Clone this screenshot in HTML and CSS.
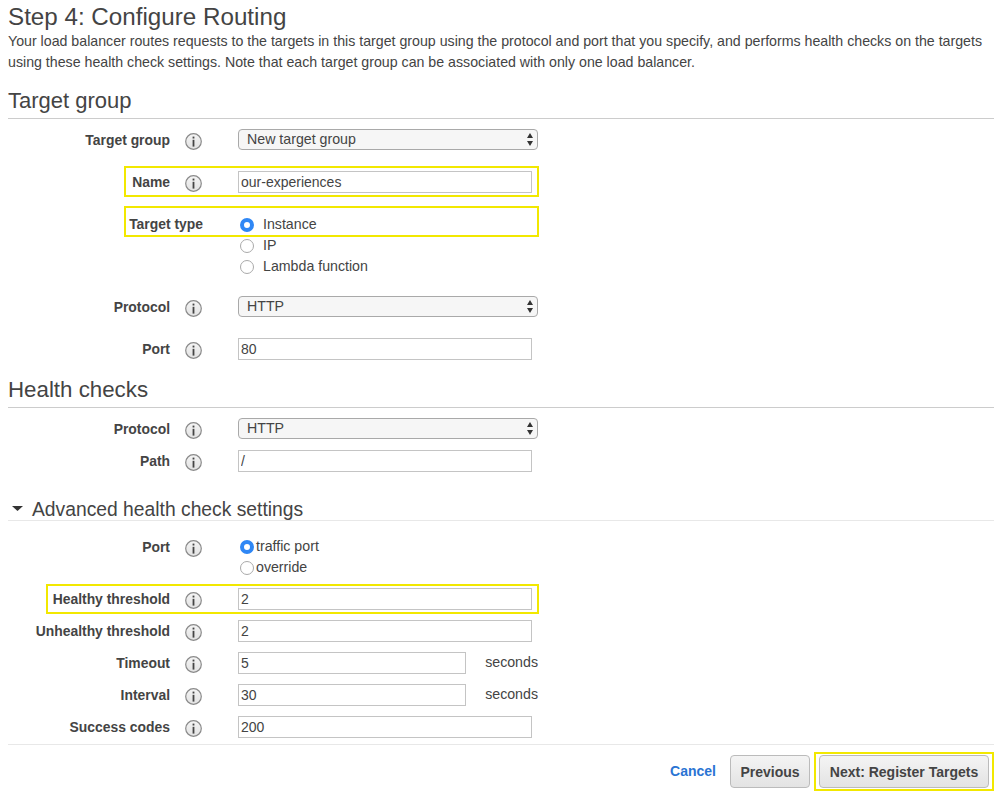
FILE: index.html
```html
<!DOCTYPE html>
<html lang="en">
<head>
<meta charset="utf-8">
<title>Step 4: Configure Routing</title>
<link rel="stylesheet" href="styles.css">
</head>
<body>
<svg class="defs" width="0" height="0" aria-hidden="true">
  <symbol id="info" viewBox="0 0 17 17">
    <defs>
      <linearGradient id="info-fill" x1="0" y1="0" x2="0" y2="1">
        <stop offset="0" stop-color="#f4f4f4"/>
        <stop offset="1" stop-color="#e2e2e2"/>
      </linearGradient>
    </defs>
    <circle cx="8.5" cy="8.5" r="7.8" fill="url(#info-fill)" stroke="#8a8a8a" stroke-width="1.2"/>
    <rect x="7.6" y="6.8" width="1.8" height="6.8" fill="#444"/>
    <rect x="7.6" y="3.6" width="1.8" height="1.9" fill="#444"/>
  </symbol>
</svg>
<main class="page">
  <h1 class="title">Step 4: Configure Routing</h1>
  <p class="intro">Your load balancer routes requests to the targets in this target group using the protocol and port that you specify, and performs health checks on the targets using these health check settings. Note that each target group can be associated with only one load balancer.</p>

  <h2 class="section section-target">Target group</h2>
  <form class="form">
    <div class="row m-10">
      <label class="label">Target group</label>
      <svg class="info"><use href="#info"/></svg>
      <div class="select-wrap">
        <select class="select"><option>New target group</option></select>
        <svg class="arrows" viewBox="0 0 6 13"><path d="M3 0L6 5H0ZM3 13L0 8H6Z"/></svg>
      </div>
    </div>
    <div class="row m-21">
      <label class="label">Name</label>
      <svg class="info"><use href="#info"/></svg>
      <input class="input" type="text" value="our-experiences">
    </div>
    <div class="row m-21">
      <label class="label label-wide">Target type</label>
      <div class="radios">
        <label class="radio"><input class="radio-input" type="radio" name="type" checked>Instance</label>
        <label class="radio"><input class="radio-input" type="radio" name="type">IP</label>
        <label class="radio"><input class="radio-input" type="radio" name="type">Lambda function</label>
      </div>
    </div>
    <div class="row m-19">
      <label class="label">Protocol</label>
      <svg class="info"><use href="#info"/></svg>
      <div class="select-wrap">
        <select class="select"><option>HTTP</option></select>
        <svg class="arrows" viewBox="0 0 6 13"><path d="M3 0L6 5H0ZM3 13L0 8H6Z"/></svg>
      </div>
    </div>
    <div class="row m-21">
      <label class="label">Port</label>
      <svg class="info"><use href="#info"/></svg>
      <input class="input" type="text" value="80">
    </div>

    <h2 class="section section-health">Health checks</h2>
    <div class="row m-10">
      <label class="label">Protocol</label>
      <svg class="info"><use href="#info"/></svg>
      <div class="select-wrap">
        <select class="select"><option>HTTP</option></select>
        <svg class="arrows" viewBox="0 0 6 13"><path d="M3 0L6 5H0ZM3 13L0 8H6Z"/></svg>
      </div>
    </div>
    <div class="row m-11">
      <label class="label">Path</label>
      <svg class="info"><use href="#info"/></svg>
      <input class="input" type="text" value="/">
    </div>

    <h3 class="advanced"><svg class="caret" viewBox="0 0 11 5"><path d="M0 0H11L5.5 5Z"/></svg>Advanced health check settings</h3>
    <div class="row m-15">
      <label class="label">Port</label>
      <svg class="info"><use href="#info"/></svg>
      <div class="radios radios-compact">
        <label class="radio"><input class="radio-input" type="radio" name="port" checked>traffic port</label>
        <label class="radio"><input class="radio-input" type="radio" name="port">override</label>
      </div>
    </div>
    <div class="row m-10">
      <label class="label">Healthy threshold</label>
      <svg class="info"><use href="#info"/></svg>
      <input class="input" type="text" value="2">
    </div>
    <div class="row m-10">
      <label class="label">Unhealthy threshold</label>
      <svg class="info"><use href="#info"/></svg>
      <input class="input" type="text" value="2">
    </div>
    <div class="row m-10">
      <label class="label">Timeout</label>
      <svg class="info"><use href="#info"/></svg>
      <div class="with-unit"><input class="input input-short" type="text" value="5"><span class="unit">seconds</span></div>
    </div>
    <div class="row m-10">
      <label class="label">Interval</label>
      <svg class="info"><use href="#info"/></svg>
      <div class="with-unit"><input class="input input-short" type="text" value="30"><span class="unit">seconds</span></div>
    </div>
    <div class="row m-10">
      <label class="label">Success codes</label>
      <svg class="info"><use href="#info"/></svg>
      <input class="input" type="text" value="200">
    </div>
  </form>

  <footer class="footer">
    <a class="cancel" href="#">Cancel</a>
    <button class="btn btn-prev" type="button">Previous</button>
    <button class="btn btn-next" type="button">Next: Register Targets</button>
  </footer>

  <div class="mark mark-name"></div>
  <div class="mark mark-type"></div>
  <div class="mark mark-healthy"></div>
  <div class="mark mark-next"></div>
</main>
</body>
</html>
```

FILE: styles.css
```css
* { box-sizing: border-box; }
html, body { margin: 0; padding: 0; background: #fff; }
body { font-family: "Liberation Sans", Arial, sans-serif; color: #444; font-size: 14px; overflow: hidden; }
.defs { position: absolute; }
.page { position: relative; width: 998px; height: 793px; padding: 0 4px 0 8px; }

.title { margin: 0; padding-top: 4px; font-size: 24.2px; line-height: 26px; font-weight: 400; }
.intro { margin: 0; padding-top: 1px; font-size: 14.2px; line-height: 21px; }

.section { margin: 0; line-height: 26px; font-weight: 400; border-bottom: 1px solid #ccc; display: flex; align-items: flex-end; }
.section-target { height: 46px; font-size: 22px; padding-bottom: 4px; }
.section-health { height: 48px; font-size: 22.3px; padding-bottom: 4px; }

.advanced { margin: 0; height: 49px; display: flex; align-items: flex-end; font-size: 19.3px; line-height: 20px; font-weight: 400; border-bottom: 1px solid #e8e8e8; padding: 0 0 0 4px; }
.caret { width: 11px; height: 5px; margin: 0 9px 9px 0; fill: #333; flex: none; }

.row { display: grid; grid-template-columns: 162px 68px 1fr; align-items: start; }
.m-10 { margin-top: 10px; }
.m-11 { margin-top: 11px; }
.m-15 { margin-top: 15px; }
.m-19 { margin-top: 19px; }
.m-21 { margin-top: 21px; }

.label { font-size: 13.9px; font-weight: 700; text-align: right; padding-top: 1px; line-height: 20px; white-space: nowrap; }
.label-wide { grid-column: 1 / span 2; padding-top: 0; padding-right: 35px; }
.info { width: 17px; height: 17px; margin: 4px 0 0 15px; }

.input { display: block; width: 294px; height: 22px; border: 1px solid #c4c4c4; padding: 0 2px; margin: 0; font: 14px/20px "Liberation Sans", Arial, sans-serif; color: #444; background: #fff; border-radius: 0; outline: none; }
.input-short { width: 228px; }
.with-unit { display: flex; width: 300px; justify-content: space-between; }
.unit { font-size: 14.2px; line-height: 20px; }

.select-wrap { position: relative; width: 300px; height: 21px; }
.select { appearance: none; -webkit-appearance: none; display: block; width: 100%; height: 21px; padding: 0 20px 1px 8px; margin: 0; border: 1px solid #a9a9a9; border-radius: 4px; background: #f6f6f6; font: 14.2px "Liberation Sans", Arial, sans-serif; color: #444; outline: none; }
.arrows { position: absolute; top: 4px; right: 5px; width: 6px; height: 13px; fill: #333; pointer-events: none; }

.radios { display: flex; flex-direction: column; }
.radio { display: flex; align-items: center; height: 21px; line-height: 21px; gap: 9px; padding-left: 2px; font-size: 14.2px; }
.radios-compact .radio { gap: 2px; }
.radio-input { appearance: none; -webkit-appearance: none; margin: 1px 0 0; width: 14px; height: 14px; border-radius: 50%; border: 1px solid #aaa; background: #fff; flex: none; }
.radio-input:checked { border: 4.5px solid #2f87f5; background: #fff; }

.form { display: block; }

.footer { margin-top: 6px; height: 49px; border-top: 1px solid #e8e8e8; display: flex; align-items: flex-start; justify-content: flex-end; padding: 10px 5px 0 0; }
.cancel { color: #2a74d3; font-weight: 700; text-decoration: none; margin-right: 14px; line-height: 33px; }
.btn { height: 33px; padding: 0; border: 1px solid #bbb; border-radius: 4px; background: linear-gradient(#f4f4f4, #e3e3e3); color: #444; font: 700 14px "Liberation Sans", Arial, sans-serif; }
.btn-prev { width: 80px; margin-right: 9px; }
.btn-next { width: 170px; }

.mark { position: absolute; border: 2px solid #f2e800; pointer-events: none; }
.mark-name { left: 124px; top: 166px; width: 415px; height: 31px; }
.mark-type { left: 124px; top: 206px; width: 415px; height: 31px; }
.mark-healthy { left: 46px; top: 584px; width: 493px; height: 30px; }
.mark-next { left: 814px; top: 752px; width: 180px; height: 39px; }
```
